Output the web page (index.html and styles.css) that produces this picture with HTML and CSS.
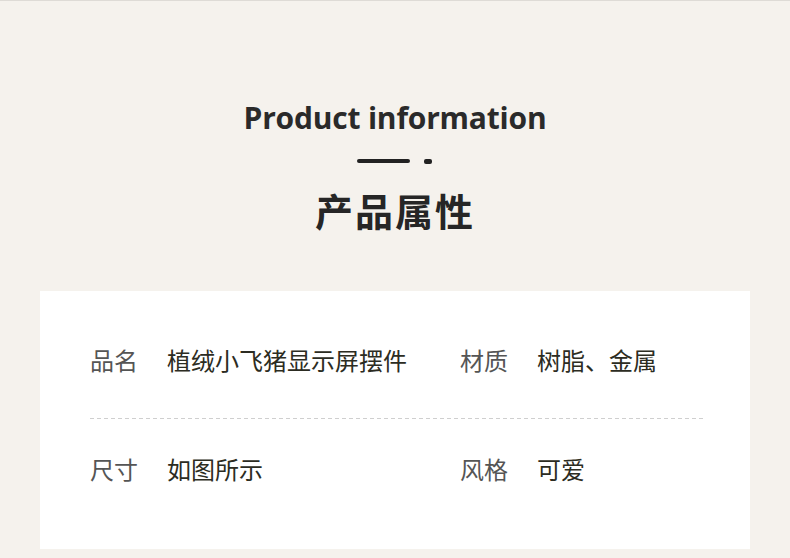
FILE: index.html
```html
<!DOCTYPE html>
<html lang="zh-CN">
<head>
<meta charset="utf-8">
<title>Product information</title>
<link rel="stylesheet" href="styles.css">
</head>
<body>
<div class="page">
  <header class="heading">
    <h1 class="title-en">Product information</h1>
    <div class="deco"><span class="deco-line"></span><span class="deco-dot"></span></div>
    <h2 class="title-cn">产品属性</h2>
  </header>
  <section class="card">
    <div class="row row-first">
      <div class="item"><span class="label">品名</span><span class="value">植绒小飞猪显示屏摆件</span></div>
      <div class="item"><span class="label">材质</span><span class="value">树脂、金属</span></div>
    </div>
    <div class="divider"></div>
    <div class="row row-second">
      <div class="item"><span class="label">尺寸</span><span class="value">如图所示</span></div>
      <div class="item"><span class="label">风格</span><span class="value">可爱</span></div>
    </div>
  </section>
</div>
</body>
</html>
```

FILE: styles.css
```css
* { box-sizing: border-box; }
html, body { margin: 0; padding: 0; }
body {
  background: #f5f2ed;
  font-family: "Noto Sans CJK SC", "Noto Sans", sans-serif;
  width: 790px;
  height: 558px;
  overflow: hidden;
}
.page {
  border-top: 1px solid #dedbd6;
  height: 558px;
  display: flex;
  flex-direction: column;
  align-items: center;
}
.heading {
  display: flex;
  flex-direction: column;
  align-items: center;
  padding-top: 97px;
}
.title-en {
  margin: 0;
  font-family: "Open Sans", "Noto Sans", sans-serif;
  font-weight: 700;
  font-size: 30px;
  line-height: 40px;
  color: #2a2a2a;
  letter-spacing: -0.2px;
}
.deco {
  display: flex;
  align-items: center;
  gap: 14px;
  margin-top: 19px;
  height: 8px;
}
.deco-line {
  width: 53px;
  height: 4px;
  border-radius: 2px;
  background: #222;
}
.deco-dot {
  width: 8px;
  height: 5px;
  border-radius: 2px;
  background: #222;
}
.title-cn {
  margin: 17px 0 0;
  font-family: "Noto Sans CJK SC", sans-serif;
  font-weight: 700;
  font-size: 38px;
  line-height: 56px;
  color: #262626;
  letter-spacing: 2px;
}
.card {
  margin-top: 53px;
  width: 710px;
  height: 258px;
  background: #ffffff;
  padding: 0 47px 0 50px;
}
.row {
  display: grid;
  grid-template-columns: 370px 1fr;
}
.row-first { padding: 53px 0 42px; }
.row-second { padding: 34px 0 0; }
.item {
  display: flex;
  align-items: center;
  height: 32px;
  font-size: 24px;
  line-height: 32px;
}
.label {
  width: 77px;
  color: #555555;
}
.value {
  color: #2c2c22;
}
.divider {
  height: 1px;
  background-image: linear-gradient(to right, #cfcfcf 0 4px, transparent 4px 7px);
  background-size: 7px 1px;
  background-repeat: repeat-x;
}
```
